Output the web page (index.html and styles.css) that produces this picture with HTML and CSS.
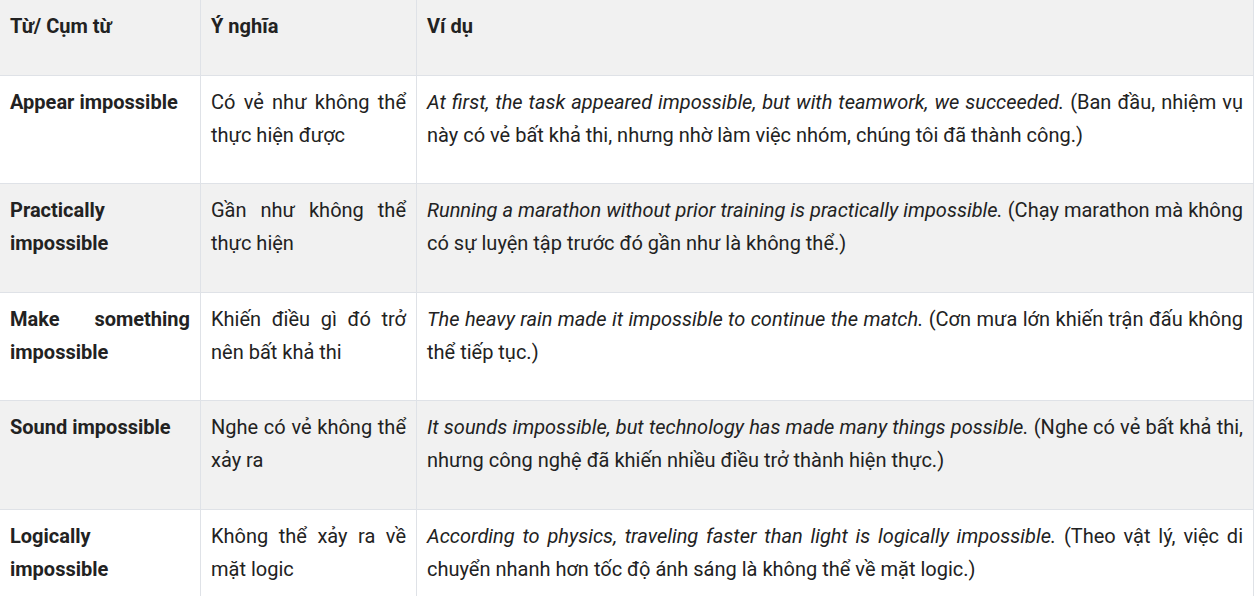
FILE: index.html
```html
<!DOCTYPE html>
<html lang="vi">
<head>
<meta charset="utf-8">
<link rel="stylesheet" href="styles.css">
</head>
<body>
<table class="vocab">
  <colgroup>
    <col class="c1">
    <col class="c2">
    <col class="c3">
  </colgroup>
  <tr class="head">
    <td><p><strong>Từ/ Cụm từ</strong></p></td>
    <td><p><strong>Ý nghĩa</strong></p></td>
    <td><p><strong>Ví dụ</strong></p></td>
  </tr>
  <tr>
    <td><p><strong>Appear impossible</strong></p></td>
    <td><p>Có vẻ như không thể thực hiện được</p></td>
    <td><p><em>At first, the task appeared impossible, but with teamwork, we succeeded.</em> (Ban đầu, nhiệm vụ này có vẻ bất khả thi, nhưng nhờ làm việc nhóm, chúng tôi đã thành công.)</p></td>
  </tr>
  <tr class="alt">
    <td><p><strong>Practically impossible</strong></p></td>
    <td><p>Gần như không thể thực hiện</p></td>
    <td><p><em>Running a marathon without prior training is practically impossible.</em> (Chạy marathon mà không có sự luyện tập trước đó gần như là không thể.)</p></td>
  </tr>
  <tr>
    <td><p><strong>Make something impossible</strong></p></td>
    <td><p>Khiến điều gì đó trở nên bất khả thi</p></td>
    <td><p><em>The heavy rain made it impossible to continue the match.</em> (Cơn mưa lớn khiến trận đấu không thể tiếp tục.)</p></td>
  </tr>
  <tr class="alt">
    <td><p><strong>Sound impossible</strong></p></td>
    <td><p>Nghe có vẻ không thể xảy ra</p></td>
    <td><p><em>It sounds impossible, but technology has made many things possible.</em> (Nghe có vẻ bất khả thi, nhưng công nghệ đã khiến nhiều điều trở thành hiện thực.)</p></td>
  </tr>
  <tr>
    <td><p><strong>Logically impossible</strong></p></td>
    <td><p>Không thể xảy ra về mặt logic</p></td>
    <td><p><em>According to physics, traveling faster than light is logically impossible.</em> (Theo vật lý, việc di chuyển nhanh hơn tốc độ ánh sáng là không thể về mặt logic.)</p></td>
  </tr>
</table>
</body>
</html>
```

FILE: styles.css
```css
html, body {
  margin: 0;
  padding: 0;
  background: #ffffff;
}
body {
  font-family: Roboto, "Noto Sans", sans-serif;
  font-size: 20px;
  line-height: 33px;
  color: #222222;
  overflow: hidden;
}
.vocab {
  border-collapse: collapse;
  table-layout: fixed;
  width: 1255px;
  margin: -1px 0 0 -1px;
}
.c1 { width: 201px; }
.c2 { width: 216px; }
.vocab td {
  border: 1px solid #dfe2e7;
  padding: 10px 10px 10px 10px;
  vertical-align: top;
  text-align: justify;
}
.vocab p {
  margin: 0 0 21.5px 0;
}
.vocab strong {
  font-weight: 700;
}
.head td,
.alt td {
  background: #f1f1f1;
}
```
